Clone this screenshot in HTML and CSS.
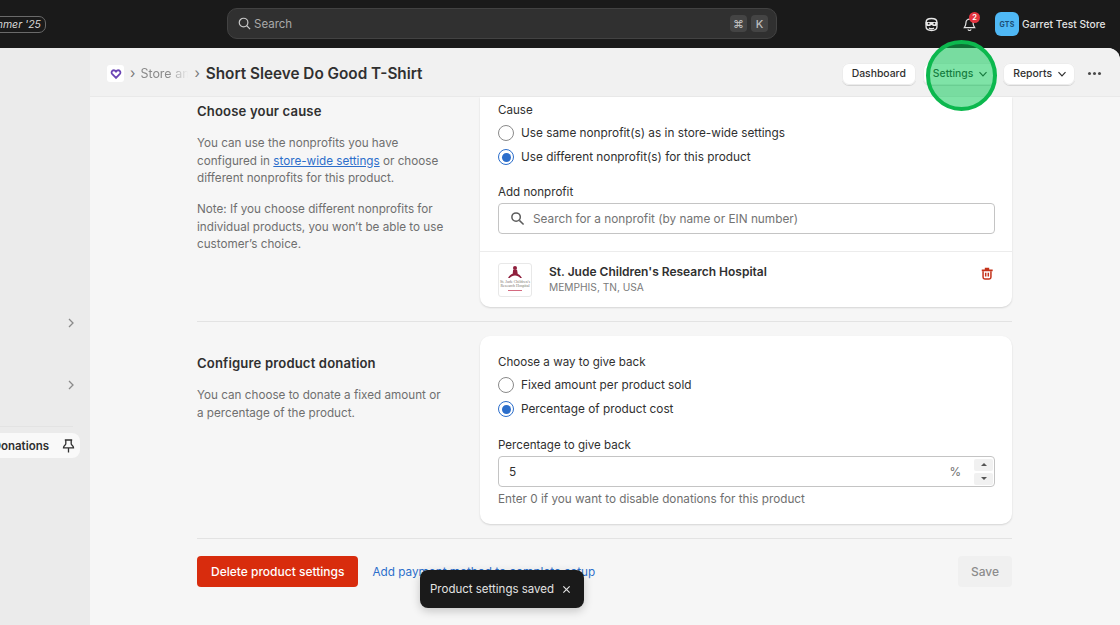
FILE: index.html
```html
<!DOCTYPE html>
<html lang="en">
<head>
<meta charset="utf-8">
<title>Short Sleeve Do Good T-Shirt</title>
<link rel="stylesheet" href="styles.css">
</head>
<body>
<header class="topbar">
  <div class="topbar-left"><span class="release-pill">Summer '25</span></div>
  <div class="global-search">
    <svg class="global-search-icon" viewBox="0 0 16 16"><circle cx="7" cy="7" r="4.6"/><path d="M10.4 10.4 14 14"/></svg>
    <span class="global-search-text">Search</span>
    <span class="kbd-group"><kbd class="kbd">⌘</kbd><kbd class="kbd">K</kbd></span>
  </div>
  <div class="topbar-right">
    <svg class="mask-icon" viewBox="0 0 16 16"><path d="M2.200 5.500C2.200 3 4.800 1.600 8 1.600s5.800 1.400 5.800 3.900v5.200c0 2.400-2.800 3.700-5.800 3.700s-5.800-1.300-5.800-3.700z"/><path class="mask-fill" d="M1.800 5.400h12.400v2.300a1.800 1.800 0 0 1-1.800 1.800h-2.500c-.8 0-1.100-1-1.900-1s-1.100 1-1.900 1H3.600a1.800 1.800 0 0 1-1.800-1.800z"/><circle class="mask-eye" cx="5" cy="7" r="1"/><circle class="mask-eye" cx="11" cy="7" r="1"/><path d="M5.300 11.800c1.500.8 3.900.8 5.400 0"/></svg>
    <span class="bell">
      <svg class="bell-icon" viewBox="0 0 16 16"><path d="M8 2.200a3.800 3.800 0 0 0-3.800 3.800c0 3-1.200 4.500-1.700 5.300h11c-.5-.8-1.700-2.300-1.700-5.300A3.800 3.800 0 0 0 8 2.200z"/><path d="M6.300 13.200a1.800 1.800 0 0 0 3.400 0"/></svg>
      <span class="bell-badge">2</span>
    </span>
    <span class="store">
      <span class="store-avatar">GTS</span>
      <span class="store-name">Garret Test Store</span>
    </span>
  </div>
</header>

<div class="shell">
  <aside class="sidebar">
    <div class="side-row side-row-first"><svg class="side-chevron" viewBox="0 0 10 10"><path d="M3 1l4 4-4 4"/></svg></div>
    <div class="side-row side-row-second"><svg class="side-chevron" viewBox="0 0 10 10"><path d="M3 1l4 4-4 4"/></svg></div>
    <div class="side-rule"></div>
    <div class="side-pinned">
      <span class="side-pinned-label">Donations</span>
      <svg class="pin-icon" viewBox="0 0 13 14"><path d="M2.800 1h7.400M3.800 1v3.800c0 1.200-2.300 2-2.300 4h10c0-2-2.300-2.800-2.300-4V1M6.500 8.800V13.500"/></svg>
    </div>
  </aside>

  <main class="main">
    <div class="page-header">
      <span class="app-logo"><svg viewBox="0 0 16 16"><path d="M8 13.200 2.800 7.800C1.200 6 2.400 3 5 3c1.300 0 2.300.7 3 1.800C8.700 3.700 9.700 3 11 3c2.600 0 3.800 3 2.200 4.800z"/></svg></span>
      <span class="crumb-sep">›</span>
      <span class="crumb">Store an</span>
      <span class="crumb-sep crumb-sep-tight">›</span>
      <h1 class="page-title">Short Sleeve Do Good T-Shirt</h1>
      <div class="header-actions">
        <button class="btn btn-plain">Dashboard</button>
        <button class="btn">Settings <svg class="btn-chevron" viewBox="0 0 10 10"><path d="M1.500 3.200 5 6.800l3.500-3.600"/></svg></button>
        <button class="btn">Reports <svg class="btn-chevron" viewBox="0 0 10 10"><path d="M1.500 3.200 5 6.800l3.500-3.600"/></svg></button>
        <span class="more"><i></i><i></i><i></i></span>
      </div>
    </div>

    <div class="content">
      <section class="section section-cause">
        <div class="section-intro">
          <h2 class="section-title">Choose your cause</h2>
          <p class="section-text">You can use the nonprofits you have configured in <a class="link-underlined" href="#">store-wide settings</a> or choose different nonprofits for this product.</p>
          <p class="section-text">Note: If you choose different nonprofits for individual products, you won’t be able to use customer’s choice.</p>
        </div>
        <div class="card card-cut">
          <div class="card-body card-body-cause">
            <div class="field-label">Cause</div>
            <div class="radio-group">
              <div class="radio-row"><span class="radio"></span>Use same nonprofit(s) as in store-wide settings</div>
              <div class="radio-row"><span class="radio radio-on"></span>Use different nonprofit(s) for this product</div>
            </div>
            <div class="field-label field-label-add">Add nonprofit</div>
            <div class="input">
              <svg class="input-search-icon" viewBox="0 0 16 16"><circle cx="6.500" cy="6.500" r="4.500"/><path d="M10 10l4.500 4.500"/></svg>
              <span class="placeholder">Search for a nonprofit (by name or EIN number)</span>
            </div>
          </div>
          <div class="nonprofit">
            <div class="nonprofit-logo">
              <svg class="jude-figure" viewBox="0 0 16 14"><circle cx="8" cy="2.200" r="2.200"/><path d="M6 4h4.200l.8 4.500c1.800.6 3.400 2 4.500 4.500h-1.800C12.300 11.200 10.300 10.300 8 10.300S3.700 11.200 2.300 13H.5C1.700 10.500 3.500 9 5.500 8.400z"/></svg>
              <span class="jude-text">St. Jude Children's Research Hospital</span>
              <span class="jude-line"></span>
            </div>
            <div class="nonprofit-info">
              <div class="nonprofit-name">St. Jude Children's Research Hospital</div>
              <div class="nonprofit-place">MEMPHIS, TN, USA</div>
            </div>
            <svg class="trash-icon" viewBox="0 0 16 16"><path class="trash-fill" d="M5.500 1.500h5v1.900h4v1.900H2V3.400h3.500z"/><path d="M3.500 5.500v6.700c0 1.300.8 2 2 2h5c1.200 0 2-.7 2-2V5.500"/><path d="M6.500 7v4.500M9.500 7v4.500"/></svg>
          </div>
        </div>
      </section>

      <hr class="rule">

      <section class="section">
        <div class="section-intro">
          <h2 class="section-title">Configure product donation</h2>
          <p class="section-text">You can choose to donate a fixed amount or a percentage of the product.</p>
        </div>
        <div class="card">
          <div class="card-body card-body-donation">
            <div class="field-label">Choose a way to give back</div>
            <div class="radio-group">
              <div class="radio-row"><span class="radio"></span>Fixed amount per product sold</div>
              <div class="radio-row"><span class="radio radio-on"></span>Percentage of product cost</div>
            </div>
            <div class="field-label field-label-percent">Percentage to give back</div>
            <div class="input input-number">
              <span class="input-value">5</span>
              <span class="input-suffix">%</span>
              <span class="spinner">
                <span class="spin"><span class="tri-up"></span></span>
                <span class="spin"><span class="tri-down"></span></span>
              </span>
            </div>
            <div class="help-text">Enter 0 if you want to disable donations for this product</div>
          </div>
        </div>
      </section>

      <hr class="rule rule-bottom">

      <div class="footer-actions">
        <button class="btn-danger">Delete product settings</button>
        <a class="link-plain" href="#">Add payment method to complete setup</a>
        <button class="btn-disabled">Save</button>
      </div>
    </div>
  </main>
</div>

<div class="toast">Product settings saved <svg class="toast-close" viewBox="0 0 10 10"><path d="M1.500 1.500l7 7M8.500 1.500l-7 7"/></svg></div>
<div class="highlight"></div>
</body>
</html>
```

FILE: styles.css
```css
* { box-sizing: border-box; }
html, body { margin: 0; height: 100%; overflow: hidden; }
body {
  width: 1120px; height: 625px; position: relative;
  background: #1a1a1a; color: #303030;
  font-family: Inter, "Liberation Sans", sans-serif;
  font-size: 12px;
  -webkit-font-smoothing: antialiased;
}
p, h1, h2 { margin: 0; }
a { color: inherit; }

.topbar { height: 48px; display: flex; align-items: center; position: relative; }
.topbar-left { width: 227px; display: flex; justify-content: flex-end; padding-right: 181px; overflow: hidden; }
.release-pill {
  flex: none; height: 17px; line-height: 15px; padding: 0 4px 0 6px; border: 1px solid #6a6a6a;
  border-radius: 7px; font-size: 10.500px; font-style: italic; color: #d8d8d8; white-space: nowrap;
}
.global-search {
  width: 550px; height: 31px; margin-top: -1px; display: flex; align-items: center; padding: 0 8px 0 9px;
  background: #303030; border: 1px solid #424242; border-radius: 10px; color: #a9a9a9;
}
.global-search-icon { width: 15px; height: 15px; fill: none; stroke: #c8c8c8; stroke-width: 1.300; margin-right: 2px; }
.global-search-text { font-size: 11.500px; }
.kbd-group { margin-left: auto; display: flex; gap: 4px; }
.kbd {
  width: 17px; height: 17px; border-radius: 4px; background: #444; color: #bdbdbd;
  font: 500 11px Inter, "DejaVu Sans", sans-serif; display: flex; align-items: center; justify-content: center;
}
.topbar-right { flex: 1; display: flex; align-items: center; padding-left: 147px; }
.mask-icon { width: 15px; height: 15px; fill: none; stroke: #e8e8e8; stroke-width: 1.400; margin-top: 1px; }
.mask-fill { fill: #e8e8e8; stroke: none; }
.mask-eye { fill: #1a1a1a; stroke: none; }
.bell { position: relative; display: flex; margin-left: 23px; }
.bell-icon { width: 15px; height: 15px; fill: none; stroke: #e3e3e3; stroke-width: 1.300; }
.bell-badge {
  position: absolute; left: 7px; top: -5px; width: 11px; height: 11px; border-radius: 50%;
  background: #e5343f; color: #fff; font-size: 7.500px; font-weight: 600; line-height: 11px; text-align: center;
}
.store { display: flex; align-items: center; margin-left: 18px; }
.store-avatar {
  width: 24px; height: 24px; border-radius: 6px; background: #4fb8f5; color: #1c4e75;
  font-size: 7px; font-weight: 700; letter-spacing: .2px; display: flex; align-items: center; justify-content: center;
}
.store-name { margin-left: 3px; font-size: 10.200px; font-weight: 500; color: #e3e3e3; white-space: nowrap; letter-spacing: .05px; }

.shell { height: 577px; display: flex; }
.sidebar { width: 90px; flex: none; background: #ebebeb; overflow: hidden; position: relative; }
.side-row { height: 20px; display: flex; align-items: center; justify-content: flex-end; padding-right: 14px; }
.side-row-first { margin-top: 265px; }
.side-row-second { margin-top: 42px; }
.side-chevron { width: 10px; height: 10px; fill: none; stroke: #8a8a8a; stroke-width: 1.300; }
.side-rule { height: 1px; background: #e3e3e3; margin: 31px 17px 0 0; }
.side-pinned {
  width: 90px; height: 25px; margin: 6px 0 0 -10px; padding: 0 5px 0 0; background: #f9f9f9; border-radius: 0 8px 8px 0;
  display: flex; align-items: center; justify-content: flex-end; gap: 13px;
  font-size: 11.500px; font-weight: 600; color: #303030;
}
.side-pinned-label { flex: none; }
.pin-icon { width: 13px; height: 14px; flex: none; fill: none; stroke: #303030; stroke-width: 1.300; }

.main { flex: 1; min-width: 0; background: #f6f6f6; border-top-right-radius: 12px; overflow: hidden; position: relative; }
.page-header {
  height: 49px; background: #f1f1f1; border-bottom: 1px solid #e9e9e9;
  display: flex; align-items: center; padding: 3px 17px 0 17px;
}
.app-logo {
  width: 17px; height: 17px; background: #fff; border-radius: 3px; display: flex; align-items: center; justify-content: center;
}
.app-logo svg { width: 12px; height: 12px; fill: none; stroke: #6b45b5; stroke-width: 2.400; }
.crumb-sep { color: #777; font-size: 14px; margin: -2px 5px 0 6px; }
.crumb-sep-tight { margin: -2px 6px 0 3px; }
.crumb {
  width: 51px; overflow: hidden; white-space: nowrap; color: #8a8a8a; font-size: 12.500px;
  -webkit-mask-image: linear-gradient(90deg, #000 55%, transparent 95%); mask-image: linear-gradient(90deg, #000 55%, transparent 95%);
}
.page-title { font-size: 15.300px; font-weight: 600; color: #303030; white-space: nowrap; }
.header-actions { margin-left: auto; display: flex; align-items: center; gap: 7px; }
.btn {
  height: 22px; padding: 0 8px 0 10px; border: 0; border-radius: 7px; background: #fff; color: #303030;
  font: 500 10.400px Inter, "Liberation Sans", sans-serif;
  box-shadow: 0 1px 0 #d4d4d4, 0 0 0 1px #ececec inset; display: flex; align-items: center; gap: 5px;
}
.btn-plain { padding: 0 10px; }
.btn-chevron { width: 10px; height: 10px; fill: none; stroke: #303030; stroke-width: 1.200; }
.more { display: flex; gap: 2px; margin-left: 3px; width: 18px; justify-content: center; }
.more i { width: 3px; height: 3px; border-radius: 50%; background: #4a4a4a; }

.content { padding: 0 108px 0 107px; }
.section { display: flex; }
.section-intro { width: 283px; flex: none; padding-right: 34px; padding-top: 17px; }
.section-cause .section-intro { padding-top: 4px; }
.section-title { font-size: 13.100px; font-weight: 600; color: #303030; letter-spacing: .15px; line-height: 20px; margin-bottom: 14px; }
.section-text { color: #6f6f6f; font-size: 11.700px; line-height: 17.500px; margin-bottom: 13.500px; }
.link-underlined { color: #2c6ecb; text-decoration: underline; }
.card {
  flex: 1; min-width: 0; background: #fff; border-radius: 10px; box-shadow: 0 1px 2px rgba(0,0,0,.14);
}
.card-cut { border-top-left-radius: 0; border-top-right-radius: 0; }
.card-body { padding: 0 17px 0 18px; }
.card-body-cause { padding-top: 4px; padding-bottom: 17px; border-bottom: 1px solid #ececec; }
.card-body-donation { padding-top: 17px; padding-bottom: 16px; }
.field-label { font-size: 11.600px; line-height: 18px; color: #303030; }
.field-label-add { margin-top: 17px; margin-bottom: 2px; }
.field-label-percent { margin-top: 18px; margin-bottom: 2px; }
.radio-group { display: flex; flex-direction: column; gap: 6px; margin-top: 5px; }
.radio-row { display: flex; align-items: center; height: 18px; gap: 7px; font-size: 11.800px; color: #303030; }
.radio { width: 16px; height: 16px; border-radius: 50%; border: 1.500px solid #8a8a8a; background: #fff; flex: none; }
.radio-on { border: 1.500px solid #2c6ecb; position: relative; }
.radio-on::after { content: ""; position: absolute; inset: 2.500px; border-radius: 50%; background: #2c6ecb; }
.input {
  height: 31px; border: 1px solid #c4c4c4; border-radius: 4px; background: #fff;
  display: flex; align-items: center; padding: 0 11px;
}
.input-search-icon { width: 15px; height: 15px; fill: none; stroke: #5c5c5c; stroke-width: 1.600; flex: none; }
.placeholder { color: #737373; font-size: 11.800px; margin-left: 8px; }
.input-number { padding: 0 1px 0 10px; }
.input-value { font-size: 11.800px; }
.input-suffix { margin-left: auto; color: #6f6f6f; font-size: 11.800px; margin-right: 13px; }
.spinner { display: flex; flex-direction: column; gap: 2px; }
.spin { width: 19px; height: 12px; background: #f1f1f1; border-radius: 2px; display: flex; align-items: center; justify-content: center; }
.tri-up { border: 3px solid transparent; border-top: 0; border-bottom: 3px solid #555; }
.tri-down { border: 3px solid transparent; border-bottom: 0; border-top: 3px solid #555; }
.help-text { margin-top: 3px; color: #6f6f6f; font-size: 11.720px; line-height: 18px; }

.nonprofit { height: 55px; display: flex; align-items: center; padding: 0 18px; }
.nonprofit-logo {
  width: 34px; height: 34px; border: 1px solid #e8e8e8; border-radius: 3px; background: #fff; overflow: hidden;
  display: flex; flex-direction: column; align-items: center; padding-top: 2px; flex: none;
}
.jude-figure { width: 16px; height: 13px; fill: #8f1f3d; flex: none; margin-bottom: 1px; }
.jude-text { width: 30px; font: 4px/4.200px "Liberation Serif", serif; color: #7a756c; text-align: center; flex: none; }
.jude-line { width: 14px; height: 1px; background: #d46a80; margin-top: 2px; flex: none; }
.nonprofit-info { margin-left: 17px; margin-top: -2px; }
.nonprofit-name { font-size: 12px; font-weight: 600; line-height: 17px; color: #303030; }
.nonprofit-place { font-size: 10.200px; line-height: 15px; color: #7a7a7a; }
.trash-icon { width: 14px; height: 15px; margin-left: auto; margin-top: -12px; fill: none; stroke: #c4321a; stroke-width: 1.700; }
.trash-fill { fill: #c4321a; stroke: none; }

.rule { height: 1px; border: 0; margin: 14px 0; background: #e3e3e3; }
.rule-bottom { margin: 14px 0 17px; }
.footer-actions { display: flex; align-items: center; }
.btn-danger {
  height: 31px; padding: 0 14px; border: 0; border-radius: 4px; background: #d82c0d; color: #fff;
  font: 500 12px Inter, "Liberation Sans", sans-serif;
}
.link-plain { margin-left: 14px; color: #2c6ecb; text-decoration: none; font-size: 11.750px; }
.btn-disabled {
  margin-left: auto; width: 54px; height: 31px; border: 0; border-radius: 4px; background: #f0f0f0; color: #8c8c8c;
  font: 500 12px Inter, "Liberation Sans", sans-serif;
}

.toast {
  position: absolute; left: 420px; top: 570px; width: 164px; height: 38px; padding: 0 13px 0 10px;
  background: #1a1a1a; color: #e3e3e3; border-radius: 8px; font-size: 11.500px;
  display: flex; align-items: center; justify-content: space-between; white-space: nowrap;
  box-shadow: 0 3px 10px rgba(0,0,0,.2);
}
.toast-close { width: 9px; height: 9px; fill: none; stroke: #e3e3e3; stroke-width: 1.300; }
.highlight {
  position: absolute; left: 926px; top: 39.500px; width: 71px; height: 71px; border-radius: 50%;
  background: rgba(0, 200, 80, .5); border: 4px solid #0cb84e;
}
```
